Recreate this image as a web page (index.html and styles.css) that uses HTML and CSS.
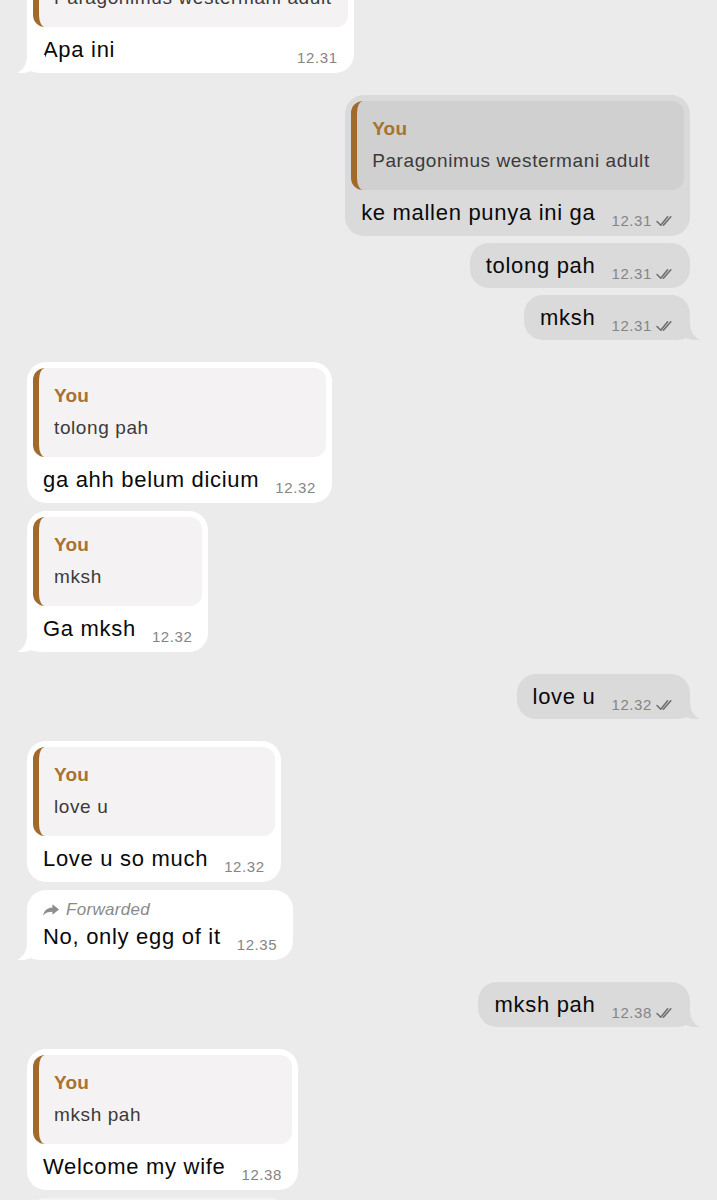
FILE: index.html
```html
<!DOCTYPE html>
<html lang="id">
<head>
    <meta charset="UTF-8">
    <meta name="viewport" content="width=device-width, initial-scale=1.0">
    <title>Chat</title>
    <link rel="stylesheet" href="styles.css">
</head>
<body>

    <div class="chat">

        <!-- grup 1 -->
        <div class="bubble in reply tail">
            <div class="quote">
                <div class="quote-name">You</div>
                <div class="quote-text">Paragonimus westermani adult</div>
            </div>
            <div class="msg-row">
                <span class="msg-text">Apa ini</span>
                <span class="time">12.31</span>
            </div>
            <svg class="tail-in" viewBox="0 0 28 18"><path d="M10 0 C10 10 6 15 0 18 C6 18.5 10 17.5 14 16 C17 17.5 21 18 28 18 L28 0 Z"/></svg>
        </div>

        <div class="group">
            <div class="bubble out reply">
                <div class="quote">
                    <div class="quote-name">You</div>
                    <div class="quote-text">Paragonimus westermani adult</div>
                </div>
                <div class="msg-row">
                    <span class="msg-text">ke mallen punya ini ga</span>
                    <span class="time">12.31 <svg class="ticks" viewBox="0 0 17 11"><path d="M1 6 L4.5 9.5 L11 1.5 M7 9.5 L14 1.5"/></svg></span>
                </div>
            </div>
            <div class="bubble out">
                <div class="msg-row">
                    <span class="msg-text">tolong pah</span>
                    <span class="time">12.31 <svg class="ticks" viewBox="0 0 17 11"><path d="M1 6 L4.5 9.5 L11 1.5 M7 9.5 L14 1.5"/></svg></span>
                </div>
            </div>
            <div class="bubble out tail">
                <div class="msg-row">
                    <span class="msg-text">mksh</span>
                    <span class="time">12.31 <svg class="ticks" viewBox="0 0 17 11"><path d="M1 6 L4.5 9.5 L11 1.5 M7 9.5 L14 1.5"/></svg></span>
                </div>
                <svg class="tail-out" viewBox="0 0 28 18"><path d="M18 0 C18 10 22 15 28 18 C22 18.5 18 17.5 14 16 C11 17.5 7 18 0 18 L0 0 Z"/></svg>
            </div>
        </div>

        <div class="group">
            <div class="bubble in reply">
                <div class="quote">
                    <div class="quote-name">You</div>
                    <div class="quote-text">tolong pah</div>
                </div>
                <div class="msg-row">
                    <span class="msg-text">ga ahh belum dicium</span>
                    <span class="time">12.32</span>
                </div>
            </div>
            <div class="bubble in reply tail">
                <div class="quote">
                    <div class="quote-name">You</div>
                    <div class="quote-text">mksh</div>
                </div>
                <div class="msg-row">
                    <span class="msg-text">Ga mksh</span>
                    <span class="time">12.32</span>
                </div>
                <svg class="tail-in" viewBox="0 0 28 18"><path d="M10 0 C10 10 6 15 0 18 C6 18.5 10 17.5 14 16 C17 17.5 21 18 28 18 L28 0 Z"/></svg>
            </div>
        </div>

        <div class="group">
            <div class="bubble out tail">
                <div class="msg-row">
                    <span class="msg-text">love u</span>
                    <span class="time">12.32 <svg class="ticks" viewBox="0 0 17 11"><path d="M1 6 L4.5 9.5 L11 1.5 M7 9.5 L14 1.5"/></svg></span>
                </div>
                <svg class="tail-out" viewBox="0 0 28 18"><path d="M18 0 C18 10 22 15 28 18 C22 18.5 18 17.5 14 16 C11 17.5 7 18 0 18 L0 0 Z"/></svg>
            </div>
        </div>

        <div class="group">
            <div class="bubble in reply">
                <div class="quote">
                    <div class="quote-name">You</div>
                    <div class="quote-text">love u</div>
                </div>
                <div class="msg-row">
                    <span class="msg-text">Love u so much</span>
                    <span class="time">12.32</span>
                </div>
            </div>
            <div class="bubble in forward tail">
                <div class="fwd">
                    <svg class="fwd-icon" viewBox="0 0 18 12"><path d="M10 0 L17 5.5 L10 11 L10 7.8 C5.5 7.8 2.5 8.8 0 12 C1 7 4 3.6 10 3.3 Z"/></svg>
                    Forwarded
                </div>
                <div class="msg-row">
                    <span class="msg-text">No, only egg of it</span>
                    <span class="time">12.35</span>
                </div>
                <svg class="tail-in" viewBox="0 0 28 18"><path d="M10 0 C10 10 6 15 0 18 C6 18.5 10 17.5 14 16 C17 17.5 21 18 28 18 L28 0 Z"/></svg>
            </div>
        </div>

        <div class="group">
            <div class="bubble out tail">
                <div class="msg-row">
                    <span class="msg-text">mksh pah</span>
                    <span class="time">12.38 <svg class="ticks" viewBox="0 0 17 11"><path d="M1 6 L4.5 9.5 L11 1.5 M7 9.5 L14 1.5"/></svg></span>
                </div>
                <svg class="tail-out" viewBox="0 0 28 18"><path d="M18 0 C18 10 22 15 28 18 C22 18.5 18 17.5 14 16 C11 17.5 7 18 0 18 L0 0 Z"/></svg>
            </div>
        </div>

        <div class="group">
            <div class="bubble in reply">
                <div class="quote">
                    <div class="quote-name">You</div>
                    <div class="quote-text">mksh pah</div>
                </div>
                <div class="msg-row">
                    <span class="msg-text">Welcome my wife</span>
                    <span class="time">12.38</span>
                </div>
            </div>
            <div class="bubble in next">
                <div class="msg-row">
                    <span class="msg-text">&nbsp;</span>
                </div>
            </div>
        </div>

    </div>

</body>
</html>
```

FILE: styles.css
```css
/* Latar belakang chat abu-abu terang */
body {
    margin: 0;
    background: #ebebeb;
    font-family: 'Liberation Sans', Arial, sans-serif;
    color: #0a0a0a;
    height: 1200px;
    overflow: hidden;
}

.chat {
    display: flex;
    flex-direction: column;
    margin-top: -68px;
}

.group {
    display: flex;
    flex-direction: column;
    gap: 7px;
    margin-top: 22px;
}

.chat > .group:first-of-type {
    margin-top: 23px;
}

/* Bubble dasar */
.bubble {
    position: relative;
    display: flex;
    flex-direction: column;
    border-radius: 19px;
    max-width: 80%;
}

.bubble.in {
    align-self: flex-start;
    margin-left: 27px;
    background: #fff;
}

.bubble.in + .bubble.in {
    margin-top: 1px;
}

.bubble.out {
    align-self: flex-end;
    margin-right: 27px;
    background: #dadada;
}

.bubble.reply {
    padding-top: 6px;
}

/* Kotak kutipan balasan */
.quote {
    margin: 0 6px;
    border-left: 6px solid #a16a2b;
    border-radius: 12px;
    padding: 16px 16px 17px 15px;
    background: #f4f2f3;
}

.out .quote {
    background: #d0d0d0;
}

.quote-name {
    font-size: 19px;
    line-height: 24px;
    font-weight: bold;
    color: #a8722f;
    letter-spacing: 0.2px;
}

.quote-text {
    margin-top: 8px;
    font-size: 19px;
    line-height: 24px;
    color: #3b3b3b;
    letter-spacing: 0.6px;
    white-space: nowrap;
}

/* Baris pesan + waktu */
.msg-row {
    display: flex;
    align-items: flex-end;
    justify-content: space-between;
    gap: 16px;
    padding: 10px 16px 9px 16px;
}

.reply .msg-row {
    padding-bottom: 10px;
}

.msg-text {
    font-size: 22px;
    line-height: 26px;
    letter-spacing: 0.7px;
    white-space: nowrap;
}

.time {
    display: flex;
    align-items: center;
    gap: 4px;
    font-size: 15px;
    line-height: 18px;
    letter-spacing: 0.6px;
    color: #858585;
    margin-bottom: -4px;
    white-space: nowrap;
}

.ticks {
    width: 18px;
    height: 12px;
    fill: none;
    stroke: #6f6f6f;
    stroke-width: 1.5;
    stroke-linecap: round;
    stroke-linejoin: round;
}

/* Label diteruskan */
.forward .msg-row {
    padding-top: 3px;
    padding-bottom: 10px;
}

.fwd {
    display: flex;
    align-items: center;
    gap: 6px;
    padding: 9px 16px 0 16px;
    font-size: 17px;
    line-height: 22px;
    font-style: italic;
    color: #8a8a8a;
    letter-spacing: 0.3px;
}

.fwd-icon {
    width: 17px;
    height: 12px;
    fill: #8e8e8e;
}

/* Ekor bubble */
.tail-in,
.tail-out {
    position: absolute;
    bottom: 0;
    width: 28px;
    height: 18px;
}

.tail-in {
    left: -10px;
    fill: #fff;
}

.tail-out {
    right: -10px;
    fill: #dadada;
}

.bubble.next {
    width: 262px;
    background: #f3f3f3;
}
```
